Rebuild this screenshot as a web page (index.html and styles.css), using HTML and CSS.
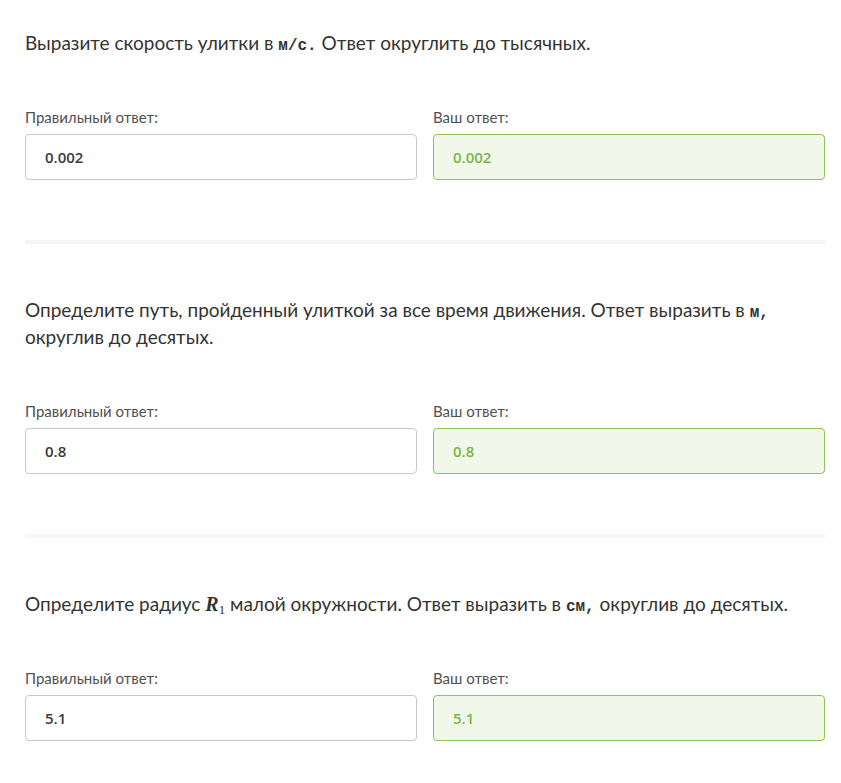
FILE: index.html
```html
<!DOCTYPE html>
<html lang="ru">
<head>
<meta charset="utf-8">
<link rel="stylesheet" href="styles.css">
</head>
<body>
<main class="page">
  <section class="task">
    <p class="question">Выразите скорость улитки в <span class="tt">м/с.</span> Ответ округлить до тысячных.</p>
    <div class="answers">
      <div class="field">
        <div class="label">Правильный ответ:</div>
        <div class="box">0.002</div>
      </div>
      <div class="field">
        <div class="label">Ваш ответ:</div>
        <div class="box box-ok">0.002</div>
      </div>
    </div>
  </section>
  <hr class="sep">
  <section class="task">
    <p class="question">Определите путь, пройденный улиткой за все время движения. Ответ выразить в <span class="tt">м,</span> округлив до десятых.</p>
    <div class="answers">
      <div class="field">
        <div class="label">Правильный ответ:</div>
        <div class="box">0.8</div>
      </div>
      <div class="field">
        <div class="label">Ваш ответ:</div>
        <div class="box box-ok">0.8</div>
      </div>
    </div>
  </section>
  <hr class="sep">
  <section class="task">
    <p class="question">Определите радиус <span class="math">R<sub>1</sub></span> малой окружности. Ответ выразить в <span class="tt">см,</span> округлив до десятых.</p>
    <div class="answers">
      <div class="field">
        <div class="label">Правильный ответ:</div>
        <div class="box">5.1</div>
      </div>
      <div class="field">
        <div class="label">Ваш ответ:</div>
        <div class="box box-ok">5.1</div>
      </div>
    </div>
  </section>
</main>
</body>
</html>
```
FILE: styles.css
```css
html, body {
  margin: 0;
  padding: 0;
  background: #ffffff;
}
body {
  font-family: "Lato", "Open Sans", sans-serif;
  color: #333333;
}
.page {
  padding: 29px 16px 40px 25px;
}
.task {
  display: flex;
  flex-direction: column;
}
.question {
  margin: 0;
  font-size: 19px;
  line-height: 27px;
  color: #333333;
}
.tt {
  font-family: "Liberation Mono", "DejaVu Sans Mono", monospace;
  font-weight: bold;
  font-size: 16px;
  line-height: 1;
}
.math {
  font-family: "Liberation Serif", serif;
  font-style: italic;
  font-weight: bold;
  font-size: 20px;
  line-height: 1;
}
.math sub {
  font-style: normal;
  font-weight: normal;
  font-size: 13px;
  vertical-align: -3px;
  line-height: 0;
}
.answers {
  display: grid;
  grid-template-columns: 1fr 1fr;
  gap: 16px;
  margin-top: 51px;
}
.label {
  font-size: 15px;
  line-height: 20px;
  color: #505050;
  margin-bottom: 7px;
}
.box {
  box-sizing: border-box;
  height: 46px;
  border: 1px solid #c9c9c9;
  border-radius: 4px;
  padding: 0 19px;
  display: flex;
  align-items: center;
  font-family: "Open Sans", sans-serif;
  font-weight: 600;
  font-size: 15px;
  color: #3a3a3a;
}
.box-ok {
  background: #f1f8ea;
  border-color: #8cc455;
  color: #7ab648;
}
.sep {
  margin: 60px 0 52px 0;
  height: 4px;
  border: 0;
  background: #f5f5f8;
}
```
